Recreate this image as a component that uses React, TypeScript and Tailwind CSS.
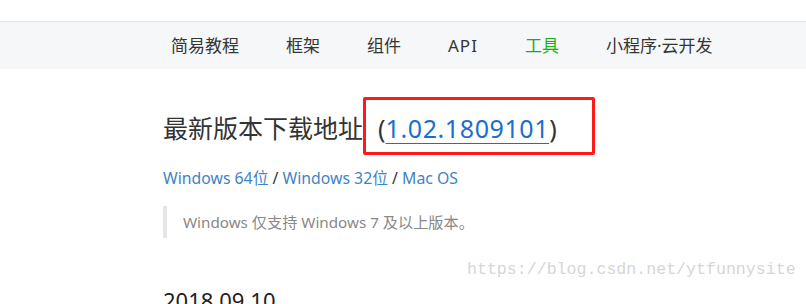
const navItems = ["简易教程", "框架", "组件", "API", "工具", "小程序·云开发"];

const App = () => {
  return (
    <div className="relative h-[304px] w-[806px] overflow-hidden bg-white font-['Noto_Sans','Noto_Sans_CJK_SC',sans-serif] text-[#333]">
      <div className="h-[22px] border-b border-[#e3e5e7] bg-white" />
      <nav className="flex h-[47px] items-center gap-[47px] bg-[#f5f7f8] pl-[171px] text-[17px] text-[#353535]">
        {navItems.map((item) => (
          <span key={item} className={item === "工具" ? "text-[#1aad19]" : item === "API" ? "tracking-[1px]" : ""}>
            {item}
          </span>
        ))}
      </nav>

      <div className="pl-[163px]">
        <h1 className="mt-[41px] text-[25px] leading-[37px] font-normal">
          最新版本下载地址<span className="ml-[15px]">(</span>
          <a className="tracking-[0.6px] text-[#1a6fcc] underline decoration-1 underline-offset-[5px]">1.02.1809101</a>)
        </h1>

        <p className="mt-[19px] text-[15.8px] leading-[24px] text-[#333]">
          <a className="text-[#3e84c6]">Windows 64位</a> /{" "}
          <a className="text-[#3e84c6]">Windows 32位</a> /{" "}
          <a className="text-[#3e84c6]">Mac OS</a>
        </p>

        <blockquote className="mt-[16px] border-l-4 border-[#e5e5e5] py-[5px] pl-[16px] text-[15.2px] leading-[22px] text-[#888]">
          Windows 仅支持 Windows 7 及以上版本。
        </blockquote>

        <h2 className="mt-[47px] text-[22px] leading-[30px] text-[#222]">2018.09.10</h2>
      </div>

      {/* annotation box */}
      <div className="absolute left-[363px] top-[97px] h-[58px] w-[232px] rounded-[2px] border-[3px] border-[#ff1a1a]" />

      {/* watermark */}
      <div className="absolute left-[467px] top-[259px] font-['Liberation_Mono',monospace] text-[16.6px] leading-[22px] text-[#d6d6d6]">
        https://blog.csdn.net/ytfunnysite
      </div>
    </div>
  );
};

export default App;
